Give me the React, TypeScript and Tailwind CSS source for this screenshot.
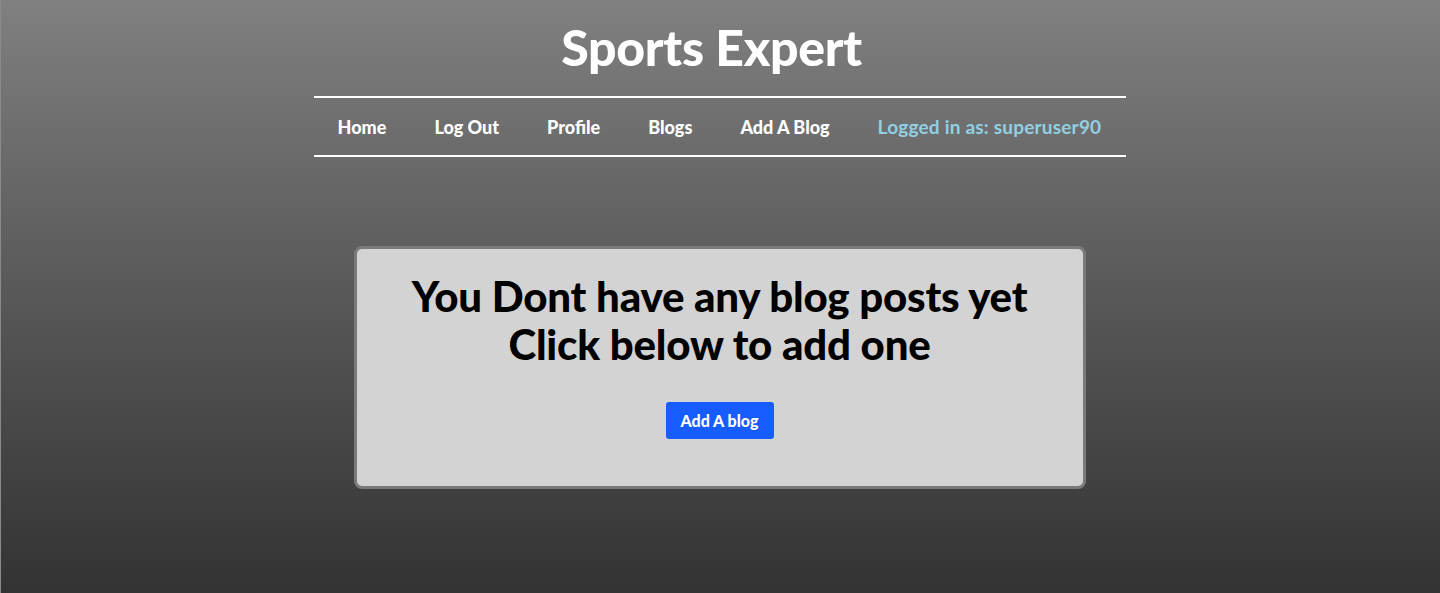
export default function App() {
  const links = ['Home', 'Log Out', 'Profile', 'Blogs', 'Add A Blog'];

  return (
    <div className="min-h-[593px] bg-gradient-to-b from-[#808080] to-[#333333] font-['Lato',sans-serif] border-l border-[#8a8a8a]">
      <header className="flex flex-col items-center pt-[20px]">
        <h1 className="mr-[18px] text-[50px] leading-[54px] font-black text-white tracking-[-0.3px]">Sports Expert</h1>
        <nav className="mt-[22px] w-[812px] -translate-x-px border-y-2 border-white h-[61px] flex items-center px-6 pt-px text-[18px] font-black text-white">
          <div className="flex items-center gap-12">
            {links.map((l) => (
              <a key={l} href="#" className="whitespace-nowrap">
                {l}
              </a>
            ))}
            <span className="text-[#93cfe2] text-[19px] font-bold tracking-[0.2px] whitespace-nowrap">Logged in as: superuser90</span>
          </div>
        </nav>
      </header>

      <main className="flex justify-center pt-[89px] pb-[103px]">
        <div className="w-[732px] h-[243px] -translate-x-px bg-[#d3d3d3] border-[3px] border-[#7a7a7a] rounded-[8px] flex flex-col items-center pt-[23px]">
          <h2 className="text-[42px] leading-[48px] font-black text-black text-center tracking-[-0.2px]">
            You Dont have any blog posts yet
            <br />
            Click below to add one
          </h2>
          <button className="mt-[34px] w-[108px] h-[37px] bg-[#165cff] text-white text-[16px] font-black rounded-[3px]">
            Add A blog
          </button>
        </div>
      </main>
    </div>
  );
}
